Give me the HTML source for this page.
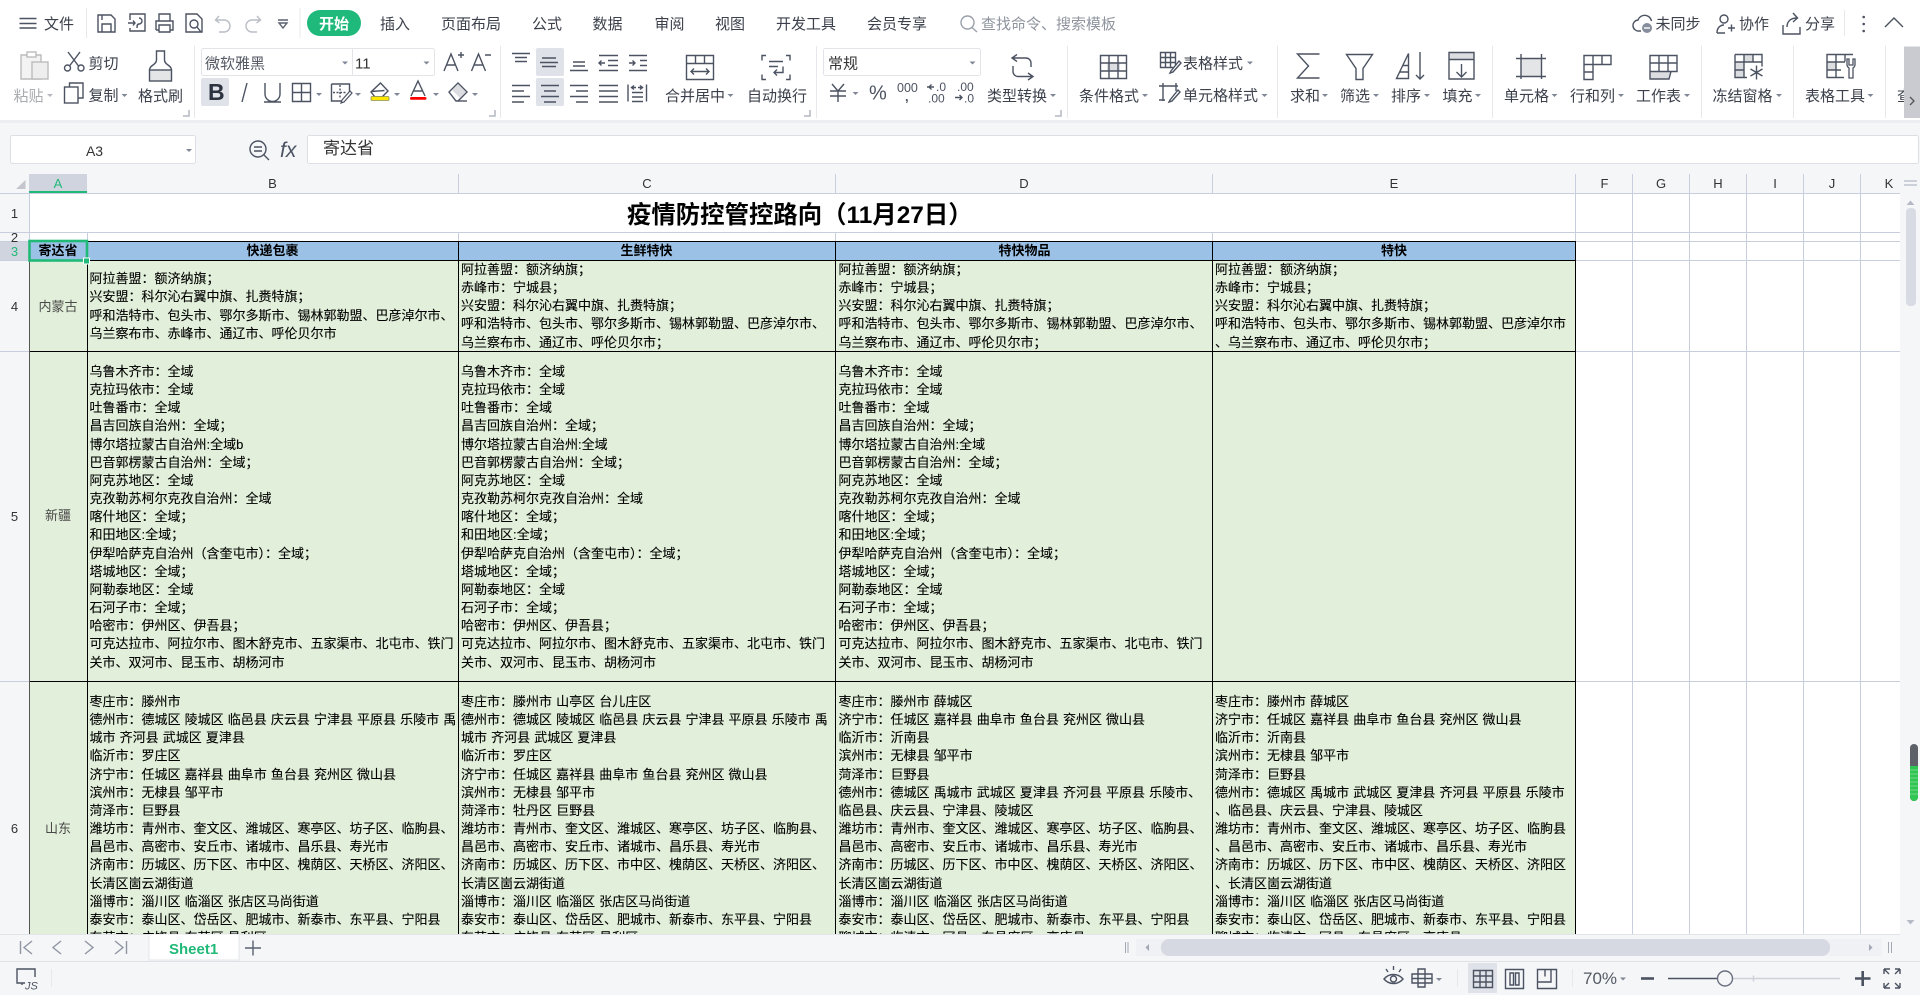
<!DOCTYPE html>
<html lang="zh-CN">
<head>
<meta charset="utf-8">
<title>疫情防控管控路向</title>
<style>
html,body{margin:0;padding:0;width:1920px;height:995px;overflow:hidden;background:#f5f6f8}
svg{position:absolute;left:0;top:0;display:block}
text{font-family:"Liberation Sans","Noto Sans CJK SC",sans-serif}
.t{font-size:15px;fill:#3b404b}
.g{font-size:15px;fill:#a9abae}
.i{fill:none;stroke:#4b5261;stroke-width:1.4}
.l{fill:none;stroke:#5a6170;stroke-width:1.4}
.m{fill:none;stroke:#b9bdc5;stroke-width:1.4}
.k{fill:#7f8695}
.h{font-size:13px;fill:#333;text-anchor:middle}
.sep{stroke:#e6e8ec;stroke-width:1}
.grid{stroke:#c8cedd;stroke-width:1;shape-rendering:crispEdges}
.blk{stroke:#000;stroke-width:1.2;shape-rendering:crispEdges}
#cells{position:absolute;left:0;top:0;width:1920px;height:934px;overflow:hidden;font-family:"Liberation Sans","Noto Sans CJK SC",sans-serif;color:#000}
.c{position:absolute;font-size:13px;line-height:18.15px;white-space:nowrap;word-spacing:.5px;-webkit-text-stroke:.12px #000}
.hd{position:absolute;top:241px;height:19px;line-height:19px;font-size:13px;font-weight:700;text-align:center;color:#000}
.p{position:absolute;left:29px;width:58px;text-align:center;font-size:13px;line-height:18px;color:#4a4a4a}
.title{position:absolute;left:627px;top:199px;height:33px;line-height:33px;font-size:24.4px;font-weight:700;color:#000;white-space:nowrap}
</style>
</head>
<body>
<svg width="1920" height="995" viewBox="0 0 1920 995">
<!-- backgrounds -->
<rect x="0" y="0" width="1920" height="120" fill="#fff"/>
<rect x="0" y="120" width="1920" height="4" fill="#eceef1"/>
<rect x="0" y="123" width="1920" height="51" fill="#f5f6f8"/>
<!-- sheet -->
<rect x="0" y="174" width="1900" height="19" fill="#f5f6f8"/>
<rect x="0" y="193" width="29" height="741" fill="#f5f6f8"/>
<rect x="29" y="193" width="1871" height="741" fill="#fff"/>
<rect x="29" y="241" width="1547" height="19" fill="#9bc2e6"/>
<rect x="29" y="260" width="1547" height="674" fill="#e2efda"/>
<rect x="29" y="174" width="58" height="19" fill="#d0d4de"/>
<rect x="29" y="191" width="58" height="2" fill="#21b978"/>
<rect x="0" y="241" width="29" height="19" fill="#d0d4de"/>
<!-- header lines -->
<path class="grid" d="M0 193.5H1900" stroke="#b0b7c9"/>
<path class="grid" d="M458.5 174V193M835.5 174V193M1212.5 174V193M1575.500 174V193M1632.5 174V193M1689.5 174V193M1746.5 174V193M1803.5 174V193M1860.5 174V193"/>
<path d="M25.5 180V189H16z" fill="#c3c6cd"/>
<!-- grid -->
<path class="grid" d="M29.5 193V934M0 232.5H1900M87.5 232V241M458.5 232V241M835.5 232V241M1212.5 232V241M1575.500 193V934M1632.5 193V934M1689.5 193V934M1746.5 193V934M1803.5 193V934M1860.5 193V934M1576 241.5H1900M1576 260.5H1900M1576 351.5H1900M1576 681.5H1900M0 241.5H29M0 260.5H29M0 351.5H29M0 681.5H29"/>
<path class="blk" d="M87.5 241V934M458.5 241V934M835.5 241V934M1212.5 241V934M1575.500 241V934M29 241.5H1576M29 260.5H1576M29 351.5H1576M29 681.5H1576"/>
<path d="M29.5 260V934" stroke="#555" stroke-width="1" shape-rendering="crispEdges"/>
<!-- col letters -->
<g class="h">
<text class="h" x="58" y="188" style="fill:#21b978">A</text>
<text class="h" x="272.5" y="188">B</text><text class="h" x="647" y="188">C</text><text class="h" x="1024" y="188">D</text><text class="h" x="1394" y="188">E</text><text class="h" x="1604.5" y="188">F</text><text class="h" x="1661" y="188">G</text><text class="h" x="1718" y="188">H</text><text class="h" x="1775" y="188">I</text><text class="h" x="1832" y="188">J</text><text class="h" x="1889" y="188">K</text>
<text class="h" x="14.5" y="218">1</text><text class="h" x="14.5" y="242">2</text><text class="h" x="14.5" y="256" style="fill:#21b978">3</text><text class="h" x="14.5" y="311">4</text><text class="h" x="14.5" y="521">5</text><text class="h" x="14.5" y="833">6</text>
</g>
<!-- selection -->
<rect x="29.5" y="241" width="57.5" height="19.5" fill="none" stroke="#21b978" stroke-width="2.6"/>
<rect x="83.5" y="258" width="6" height="6" fill="#21b978" stroke="#fff" stroke-width="1"/>

<!-- title bar -->
<path class="i" d="M19.5 18.5h17M19.5 23.5h17M19.5 28h17"/>
<text class="t" x="44" y="29">文件</text>
<path class="sep" d="M86.5 8V38M300 8V38M1844.5 10V36"/>
<path class="i" d="M98 15h13l4 4v13H98zM102 32v-8h9v8M102 15v5"/>
<path class="i" d="M130 20v-6h15v17h-15v-3M128 23h7m-2-2.500 2 2.500-2 2.500M139 18a3 3 0 0 1 3 3 3 3 0 0 1-3 3c-2 0-2 2-2 4"/>
<path class="i" d="M159 21v-7h11v7M156 30v-9h17v9h-3M159 30h-3M159 25h11v7h-11z"/>
<path class="i" d="M186 14h11l5 5v13h-16zM197 27l4 5"/><circle class="i" cx="194" cy="24" r="4"/>
<path class="m" d="M219 16l-3.500 4 4 3M216 20h8a6 6 0 0 1 0 12h-5"/>
<path class="m" d="M257 16l3.500 4-4 3M260 20h-8a6 6 0 0 0 0 12h5"/>
<path class="l" d="M278 20h10M279 23h8l-4 5z"/>
<rect x="307" y="10" width="54" height="26" rx="13" fill="#1fb97b"/>
<text x="319" y="29" font-size="15" font-weight="700" fill="#fff">开始</text>
<text class="t" x="380" y="29">插入</text>
<text class="t" x="441" y="29">页面布局</text>
<text class="t" x="532" y="29">公式</text>
<text class="t" x="592.5" y="29">数据</text>
<text class="t" x="654.5" y="29">审阅</text>
<text class="t" x="715" y="29">视图</text>
<text class="t" x="776" y="29">开发工具</text>
<text class="t" x="867" y="29">会员专享</text>
<circle cx="967.500" cy="22.500" r="6.500" fill="none" stroke="#9aa0ab" stroke-width="1.4"/><path d="M972 27.500l5 4.500" stroke="#9aa0ab" stroke-width="1.400"/>
<text x="981" y="29" font-size="15" fill="#8f949e">查找命令、搜索模板</text>
<!-- right top -->
<path class="i" d="M1641 31h-2a5.500 5.500 0 0 1-1-11 7 7 0 0 1 13.500 1"/>
<circle cx="1647" cy="28" r="5" fill="#868d9c"/><path d="M1644 28h6" stroke="#fff" stroke-width="1.400"/>
<text class="t" x="1655.500" y="29">未同步</text>
<circle class="i" cx="1724" cy="19" r="4"/><path class="i" d="M1717 33c0-5 3-8 7-8M1717 33h8M1728 28h7M1731.500 24.500v7"/>
<text class="t" x="1739" y="29">协作</text>
<path class="i" d="M1783 25v9h17v-7M1787 27c0-6 4-9 10-9M1793 13l4.500 5-4.500 4"/>
<text class="t" x="1805" y="29">分享</text>
<circle cx="1863.700" cy="17" r="1.300" fill="#4b5261"/><circle cx="1863.700" cy="24" r="1.300" fill="#4b5261"/><circle cx="1863.700" cy="31" r="1.300" fill="#4b5261"/>
<path class="i" d="M1885 27l9-9 9 9"/>

<!-- ribbon separators -->
<path class="sep" d="M194.500 46V118M500.500 46V118M816.500 46V118M1067.500 46V118M1277.500 46V118M1492.500 46V118M1701.500 46V118M1793.500 46V118M1885.500 46V118"/>
<!-- corner markers -->
<path d="M183 116h6v-6M489 116h6v-6M804 116h6v-6M1055 116h6v-6" fill="none" stroke="#b4b8c0" stroke-width="1.500"/>

<!-- clipboard -->
<path d="M21 55h20v24H21z" fill="#f3f3f3" stroke="#bcbcbc" stroke-width="1.400"/>
<rect x="27" y="52" width="9" height="5" fill="#fff" stroke="#bcbcbc" stroke-width="1.400"/>
<rect x="32" y="62" width="16" height="17" fill="#eee" stroke="#bcbcbc" stroke-width="1.400"/>
<text class="g" x="13.500" y="101">粘贴</text><path class="k" style="fill:#b5b8be" d="M47 94h6l-3 3z"/>
<path class="i" d="M69.500 66L80 52M78.500 66L68 52"/><circle class="i" cx="67.500" cy="68" r="3"/><circle class="i" cx="81" cy="68" r="3"/>
<text class="t" x="88.500" y="68.500">剪切</text>
<path class="i" d="M69.500 87v-4H83v15h-5"/><rect class="i" x="64.500" y="87" width="13.500" height="16"/>
<text class="t" x="88.500" y="100.500">复制</text><path class="k" d="M121.500 94h6l-3 3z"/>
<path class="i" d="M149.500 70c0-5 7-5 7-10v-9h8v9c0 5 7 5 7 10"/><rect x="149.500" y="70" width="22" height="11" fill="#e4e5e7" stroke="#4b5261" stroke-width="1.400"/>
<text class="t" x="138" y="101">格式刷</text>

<!-- font -->
<rect x="201.500" y="48.500" width="233" height="27" rx="2" fill="#fff" stroke="#e2e4e8"/>
<path d="M352.500 48V76" stroke="#e2e4e8"/>
<text x="205" y="68.500" font-size="15" fill="#555a64">微软雅黑</text><path class="k" d="M342 61.500h6l-3 3z"/>
<text x="355" y="68.500" font-size="15" fill="#333">11</text><path class="k" d="M423.500 61.500h6l-3 3z"/>
<path class="i" d="M444 71l7-17 7 17M446.500 65h9M458 55h6M461 52v6"/>
<path class="i" d="M471.500 71l7-17 7 17M474 65h9M485 55h6"/>
<rect x="201" y="78" width="28" height="28" rx="2" fill="#dfe2e8"/>
<text x="208" y="100" font-size="23" font-weight="700" fill="#2c3340">B</text>
<path class="i" d="M247 83l-5 19"/>
<path class="i" d="M265 83v11a7.500 7.500 0 0 0 15 0V83M264 102h17"/>
<path class="i" d="M292.500 83.500h18v18h-18zM301.500 83.500v18M292.500 92.500h18"/><path class="k" d="M316 93h6l-3 3z"/>
<path class="i" d="M331.500 84h18v8M331.500 84v17h10"/><path class="i" stroke-dasharray="2 1.500" stroke-width="1" d="M340 85v13M333 92.500h13"/><path d="M342 100l8-9 2 2-8 9-3 1z" fill="#fff" stroke="#4b5261" stroke-width="1.200"/><path class="k" d="M355 93h6l-3 3z"/>
<path class="i" d="M380.500 83l7.500 8-6 6h-7l-4-5zM371.500 91.500l13-1"/><rect x="371" y="96.500" width="18" height="4" rx="1" fill="#ffe800" stroke="#8a8f5a" stroke-width=".8"/><path class="k" d="M394 93h6l-3 3z"/>
<path class="i" d="M411 96l7-15 7 15M413.500 91h9"/><rect x="410" y="97" width="16.500" height="2.800" rx="1.400" fill="#f00"/><path class="k" d="M433 93h6l-3 3z"/>
<path d="M458 83l9 9-9 9h-2l-7-9z" fill="#fff" stroke="#4b5261" stroke-width="1.400"/><path d="M458 84l8 8-6 6-8-8z" fill="#dcdde0"/><path class="i" d="M458 101h9"/><path class="k" d="M472 93h6l-3 3z"/>

<!-- alignment -->
<rect x="536" y="48" width="28" height="28" rx="2" fill="#dfe2e8"/>
<rect x="536" y="78" width="28" height="28" rx="2" fill="#dfe2e8"/>
<path class="i" d="M512 53.500h18M515 57.500h12M515 61.500h12"/>
<path class="i" d="M542 58h14M540 62.500h18M542 66.500h14"/>
<path class="i" d="M573 62h12M573 66h12M570 70.500h18"/>
<path class="i" d="M599 55.500h19M608 60.500h10M608 65.500h10M599 70.500h19M605 63h-6m2.500-2.500L599 63l2.500 2.500"/>
<path class="i" d="M629 55.500h18M629 70.500h18M629 63h6m-2.500-2.500L635 63l-2.500 2.500M640 60.500h7M640 65.500h7"/>
<path class="i" d="M512 85.500h18M512 91h12M512 96.500h18M512 102h12"/>
<path class="i" d="M541 85.500h18M544 91h12M541 96.500h18M544 102h12"/>
<path class="i" d="M570 85.500h18M576 91h12M570 96.500h18M576 102h12"/>
<path class="i" d="M599 85.500h19M599 91h19M599 96.500h19M599 102h19"/>
<path class="i" d="M628 84.500v17M646.500 84.500v17M631 87.500h5m-2-2-2.500 2 2.500 2M643 87.500h-5m2-2 2.500 2-2.500 2M632 92.500h11M632 97h11M632 101.500h11"/>

<!-- merge -->
<path class="i" d="M686.500 55.500h27v24h-27zM686.500 63.500h27M695.500 55.500v8M704.500 55.500v8M691 71.500h18m-3-3 3 3-3 3m-12-6-3 3 3 3"/>
<text class="t" x="665" y="101">合并居中</text><path class="k" d="M727.500 94h6l-3 3z"/>
<path class="i" d="M766 55.500h-4v5M786 55.500h4v5M766 79.500h-4v-5M786 79.500h4v-5M769 61.500h14M769 66.500h9M783 66.500v6h-9m3-3-3 3 3 3"/>
<text class="t" x="747" y="101">自动换行</text>

<!-- number -->
<rect x="823.500" y="48.500" width="157" height="27" rx="2" fill="#fff" stroke="#e2e4e8"/>
<text x="828" y="68.500" font-size="15" fill="#333">常规</text><path class="k" d="M969.500 61.500h6l-3 3z"/>
<path class="i" d="M832 84l6 7 6-7M830 91h16M830 96h16M838 91v11"/>
<path class="k" d="M852.500 92h6l-3 3z"/>
<text x="869" y="99.500" font-size="20" fill="#4b5261">%</text>
<text x="897" y="92" font-size="12.500" fill="#4b5261" letter-spacing="0">000</text><text x="905" y="101" font-size="13" font-weight="700" fill="#4b5261">,</text>
<text x="936" y="91" font-size="12" fill="#4b5261">.0</text><path class="i" stroke-width="1.100" d="M927 86.500h7m-2.500-2.500-2.500 2.500 2.500 2.500" transform="translate(0,.5)"/><text x="928" y="102.500" font-size="12" fill="#4b5261">.00</text>
<text x="957" y="91" font-size="12" fill="#4b5261">.00</text><path class="i" stroke-width="1.100" d="M955 97.500h7m-2.500-2.500 2.500 2.500-2.500 2.500"/><text x="964" y="102.500" font-size="12" fill="#4b5261">.0</text>
<path class="i" d="M1017 54.500l-5 3.500 5 3.500M1012 58h14a5 5 0 0 1 5 5v4M1013 66v5.500a5 5 0 0 0 5 5h15M1028 73l5 3.500-5 3.500"/>
<text class="t" x="987" y="101">类型转换</text><path class="k" d="M1050 94h6l-3 3z"/>

<!-- cond format -->
<rect x="1107" y="62" width="13" height="9" fill="#dcdde0"/>
<path class="i" d="M1100.500 55.500h26v23h-26zM1100.500 63h26M1100.500 71h26M1109 55.500v23M1118 55.500v23"/>
<text class="t" x="1079" y="101">条件格式</text><path class="k" d="M1142 94h6l-3 3z"/>
<path class="i" d="M1160.500 52.500h15v15h-15zM1160.500 57.500h15M1160.500 62.500h15M1165.500 52.500v15M1170.500 52.500v15"/>
<path d="M1171 71l8-10 2 2-8 9-3 1z" fill="#fff" stroke="#4b5261" stroke-width="1.400"/>
<text class="t" x="1183" y="68.500">表格样式</text><path class="k" d="M1247 61.500h6l-3 3z"/>
<path class="i" d="M1159 86h19M1159 100h6M1163 83v18M1176 83v8"/><path d="M1170 100l8-10 2 2-8 9-3 1z" fill="#fff" stroke="#4b5261" stroke-width="1.400"/>
<text class="t" x="1183" y="100.500">单元格样式</text><path class="k" d="M1261.500 94h6l-3 3z"/>

<!-- edit -->
<path class="i" d="M1319.500 54h-22l11 12-11 12h22"/>
<text class="t" x="1290" y="101">求和</text><path class="k" d="M1322 94h6l-3 3z"/>
<path class="i" d="M1346.500 54.500h26l-9.500 14v11h-7v-11z"/>
<text class="t" x="1340" y="101">筛选</text><path class="k" d="M1373 94h6l-3 3z"/>
<path class="i" d="M1396.500 78.500l12-25v25zM1403 65.500h5.500M1400 72h8.500M1420 52v27m-4-4 4 4 4-4"/>
<text class="t" x="1391" y="101">排序</text><path class="k" d="M1424 94h6l-3 3z"/>
<rect x="1449" y="52.500" width="25" height="7" fill="#dcdde0"/>
<path class="i" d="M1449 52.500h25v26.500h-25zM1449 59.500h25M1461.500 64v13m-5-5 5 5 5-5"/>
<text class="t" x="1442.500" y="101">填充</text><path class="k" d="M1475 94h6l-3 3z"/>

<!-- cell group -->
<rect x="1521" y="59" width="21" height="17" fill="#e4e5e7"/>
<path class="i" d="M1516 58.500h30M1516 76.500h30M1521 54v25M1541.500 54v25"/>
<text class="t" x="1504" y="101">单元格</text><path class="k" d="M1551.500 94h6l-3 3z"/>
<path class="i" d="M1584 55.500h27v9h-18v15h-9zM1593 55.500v24M1602 55.500v9M1584 64.500h9M1584 72h9"/>
<text class="t" x="1570" y="101">行和列</text><path class="k" d="M1618 94h6l-3 3z"/>
<path d="M1650 71h21l-2 8h-19z" fill="#dcdde0"/>
<path class="i" d="M1650 55.500h27v16h-6l-2 7.500h-19zM1650 63h27M1650 71.500h21M1659 55.500v16M1668 55.500v16"/>
<text class="t" x="1636" y="101">工作表</text><path class="k" d="M1684 94h6l-3 3z"/>
<path d="M1735 54h9v8h9v-8M1735 62h9v16h-9z" fill="#dcdde0"/>
<path class="i" d="M1735 54.500h27v12M1735 54.500v23h12M1735 62h27M1735 70h9M1744 54.500v23M1753 54.500v7.500"/>
<path class="i" d="M1756.500 65.500v14M1750.500 69l12 7M1762.500 69l-12 7"/>
<text class="t" x="1712.500" y="101">冻结窗格</text><path class="k" d="M1776 94h6l-3 3z"/>
<rect x="1827" y="62" width="9" height="8" fill="#dcdde0"/>
<path class="i" d="M1853 54.500h-26v23h17M1827 62h18M1827 70h14M1836 54.500v23M1845 54.500v7"/>
<path d="M1847 59v6a4.500 4.500 0 0 0 2 3v10h4V68a4.500 4.500 0 0 0 2-3v-6l-2 0v6h-4v-6z" fill="#fff" stroke="#4b5261" stroke-width="1.300"/>
<text class="t" x="1805" y="101">表格工具</text><path class="k" d="M1867.500 94h6l-3 3z"/>
<text class="t" x="1897" y="101">查</text>
<rect x="1904" y="46.500" width="16" height="71.500" fill="#c9cbd1"/>
<path d="M1910 97l4 4-4 4" fill="none" stroke="#555" stroke-width="1.300"/>

<!-- formula bar -->
<rect x="10.500" y="135.500" width="185" height="28" rx="2" fill="#fff" stroke="#dcdfe4"/>
<text x="94.500" y="156" font-size="14" fill="#333" text-anchor="middle">A3</text>
<path class="k" d="M186 149h6l-3 3z"/>
<circle class="i" cx="258" cy="149" r="8"/><path class="i" d="M254 147h8M254 151h8M264 155l5 5"/>
<text x="280" y="157" font-size="21" font-family="Liberation Serif" font-style="italic" fill="#4b5261">fx</text>
<rect x="307.500" y="135.500" width="1611" height="28" rx="2" fill="#fff" stroke="#dcdfe4"/>
<text x="323" y="154" font-size="17" fill="#333">寄达省</text>

<!-- vertical scrollbar -->
<rect x="1900" y="174" width="20" height="760" fill="#f5f6f8"/>
<path d="M1904 181h13M1904 185h13" stroke="#b5bac6" stroke-width="1.200"/>
<path d="M1906.500 205l4-4.500 4 4.500z" fill="#b5bac6"/>
<rect x="1906" y="208" width="10" height="98" rx="4" fill="#d8dbe3"/>
<path d="M1906.500 920h8l-4 4.500z" fill="#b5bac6"/>
<rect x="1910" y="744" width="8" height="57" rx="4" fill="#5e6167"/>
<path d="M1910 766h8v31a4 4 0 0 1-8 0z" fill="#2fc653"/>
<path d="M1910 770h8M1910 774h8M1910 778h8M1910 782h8M1910 786h8M1910 790h8M1910 794h8" stroke="#8fdc9f" stroke-width=".7"/>

<!-- tab bar -->
<rect x="0" y="934" width="1920" height="27" fill="#f5f6f8"/>
<path d="M0 934.500H1900" stroke="#e2e4e9"/>
<path class="l" style="stroke:#9096a2" d="M20.500 941v13M32 941l-8 6.500 8 6.500M61 941l-8 6.500 8 6.500M85 941l8 6.500-8 6.500M115 941l8 6.500-8 6.500M126.500 941v13"/>
<rect x="149" y="934" width="90" height="26" fill="#fff" stroke="#e2e4e9"/>
<text x="169" y="954" font-size="15" font-weight="700" fill="#21b978">Sheet1</text>
<path class="l" d="M245 948h16M253 940.500v15"/>
<path d="M1125.500 942v11M1128 942v11M1888.500 942v11M1891.500 942v11" stroke="#a3a8b4"/>
<rect x="1136" y="939" width="746" height="17" fill="#f0f1f4"/>
<rect x="1161" y="939" width="669" height="17" rx="8" fill="#d6d9e1"/>
<path d="M1149 944v7l-3.500-3.500zM1869 944v7l3.500-3.500z" fill="#a3a8b4"/>

<!-- status bar -->
<rect x="0" y="961" width="1920" height="34" fill="#f5f6f8"/>
<path d="M0 961.500H1920" stroke="#dfe1e6"/>
<path class="i" d="M35 977v-8H17v14h8M22 983v2"/>
<text x="25" y="989.500" font-size="11" font-style="italic" fill="#4b5261">JS</text>
<path class="sep" d="M51.500 969V987M1457.500 969V987M1572.500 969V987"/>
<path class="i" d="M1384 979c5-6 14-6 19 0-5 6-14 6-19 0zM1386 969l2 3M1393.500 966v4M1401 969l-2 3"/><circle class="i" cx="1393.500" cy="979" r="3"/>
<path class="i" d="M1418 969h7v5h7v9h-7v4h-7v-4h-6v-9h6zM1418 974h7v9h-7zM1412 978.500h20"/>
<path class="k" d="M1436 978h6l-3 3z"/>
<rect x="1468" y="963" width="29" height="30" rx="1" fill="#dfe2e8"/>
<path class="i" d="M1473.500 970.500h19v17h-19zM1473.500 976h19M1473.500 982h19M1480 970.500v17M1486 970.500v17"/>
<path class="i" d="M1505.500 969.500h18v19h-18zM1510 973h3.500v12H1510zM1515.500 973h3.500v12h-3.500z" stroke-width="1.600"/>
<path class="i" d="M1537.500 969.500h19v19h-19zM1537.500 982h13.500v-12.500M1545 969.500v7" stroke-width="1.600"/>
<text x="1583" y="984" font-size="17" fill="#555a64">70%</text>
<path class="k" d="M1620 977.500h6l-3 3z"/>
<path d="M1641 978.500h13" stroke="#4b5261" stroke-width="2.600"/>
<path d="M1668 978.500h50" stroke="#4b5261" stroke-width="1.400"/>
<path d="M1732 978.500h108M1753.500 975.500v6" stroke="#cdd1da" stroke-width="1.400"/>
<circle cx="1725" cy="978.500" r="7.500" fill="#f5f6f8" stroke="#6a7080" stroke-width="1.400"/>
<path d="M1855 978.500h15.500M1862.700 971v15" stroke="#4b5261" stroke-width="2.600"/>
<path class="i" d="M1884 969h6M1884 969v5M1884 969l5 5M1900 969h-5M1900 969v5M1900 969l-5 5M1884 988h6M1884 988v-5M1884 988l5-5M1900 988h-5M1900 988v-5M1900 988l-5-5"/>
</svg>

<div id="cells">
<div class="title">疫情防控管控路向（11月27日）</div>
<div class="hd" style="left:29px;width:58px">寄达省</div>
<div class="hd" style="left:87px;width:371px">快递包裹</div>
<div class="hd" style="left:458px;width:377px">生鲜特快</div>
<div class="hd" style="left:836px;width:377px">特快物品</div>
<div class="hd" style="left:1212px;width:364px">特快</div>
<div class="p" style="top:298px">内蒙古</div>
<div class="p" style="top:507px">新疆</div>
<div class="p" style="top:820px">山东</div>

<div class="c" style="left:89.5px;top:270.2px">阿拉善盟：额济纳旗；<br>兴安盟：科尔沁右翼中旗、扎赉特旗；<br>呼和浩特市、包头市、鄂尔多斯市、锡林郭勒盟、巴彦淖尔市、<br>乌兰察布市、赤峰市、通辽市、呼伦贝尔市</div>
<div class="c" style="left:461px;top:261px">阿拉善盟：额济纳旗；<br>赤峰市：宁城县；<br>兴安盟：科尔沁右翼中旗、扎赉特旗；<br>呼和浩特市、包头市、鄂尔多斯市、锡林郭勒盟、巴彦淖尔市、<br>乌兰察布市、通辽市、呼伦贝尔市；</div>
<div class="c" style="left:838.5px;top:261px">阿拉善盟：额济纳旗；<br>赤峰市：宁城县；<br>兴安盟：科尔沁右翼中旗、扎赉特旗；<br>呼和浩特市、包头市、鄂尔多斯市、锡林郭勒盟、巴彦淖尔市、<br>乌兰察布市、通辽市、呼伦贝尔市；</div>
<div class="c" style="left:1215px;top:261px">阿拉善盟：额济纳旗；<br>赤峰市：宁城县；<br>兴安盟：科尔沁右翼中旗、扎赉特旗；<br>呼和浩特市、包头市、鄂尔多斯市、锡林郭勒盟、巴彦淖尔市<br>、乌兰察布市、通辽市、呼伦贝尔市；</div>

<div class="c" style="left:89.5px;top:363px">乌鲁木齐市：全域<br>克拉玛依市：全域<br>吐鲁番市：全域<br>昌吉回族自治州：全域；<br>博尔塔拉蒙古自治州:全域b<br>巴音郭楞蒙古自治州：全域；<br>阿克苏地区：全域<br>克孜勒苏柯尔克孜自治州：全域<br>喀什地区：全域；<br>和田地区:全域；<br>伊犁哈萨克自治州（含奎屯市）：全域；<br>塔城地区：全域；<br>阿勒泰地区：全域<br>石河子市：全域；<br>哈密市：伊州区、伊吾县；<br>可克达拉市、阿拉尔市、图木舒克市、五家渠市、北屯市、铁门<br>关市、双河市、昆玉市、胡杨河市</div>
<div class="c" style="left:461px;top:363px">乌鲁木齐市：全域<br>克拉玛依市：全域<br>吐鲁番市：全域<br>昌吉回族自治州：全域；<br>博尔塔拉蒙古自治州:全域<br>巴音郭楞蒙古自治州：全域；<br>阿克苏地区：全域<br>克孜勒苏柯尔克孜自治州：全域<br>喀什地区：全域；<br>和田地区:全域；<br>伊犁哈萨克自治州（含奎屯市）：全域；<br>塔城地区：全域；<br>阿勒泰地区：全域<br>石河子市：全域；<br>哈密市：伊州区、伊吾县；<br>可克达拉市、阿拉尔市、图木舒克市、五家渠市、北屯市、铁门<br>关市、双河市、昆玉市、胡杨河市</div>
<div class="c" style="left:838.5px;top:363px">乌鲁木齐市：全域<br>克拉玛依市：全域<br>吐鲁番市：全域<br>昌吉回族自治州：全域；<br>博尔塔拉蒙古自治州:全域<br>巴音郭楞蒙古自治州：全域；<br>阿克苏地区：全域<br>克孜勒苏柯尔克孜自治州：全域<br>喀什地区：全域；<br>和田地区:全域；<br>伊犁哈萨克自治州（含奎屯市）：全域；<br>塔城地区：全域；<br>阿勒泰地区：全域<br>石河子市：全域；<br>哈密市：伊州区、伊吾县；<br>可克达拉市、阿拉尔市、图木舒克市、五家渠市、北屯市、铁门<br>关市、双河市、昆玉市、胡杨河市</div>

<div class="c" style="left:89.5px;top:693px">枣庄市：滕州市<br>德州市：德城区 陵城区 临邑县 庆云县 宁津县 平原县 乐陵市 禹<br>城市 齐河县 武城区 夏津县<br>临沂市：罗庄区<br>济宁市：任城区 嘉祥县 曲阜市 鱼台县 兖州区 微山县<br>滨州市：无棣县 邹平市<br>菏泽市：巨野县<br>潍坊市：青州市、奎文区、潍城区、寒亭区、坊子区、临朐县、<br>昌邑市、高密市、安丘市、诸城市、昌乐县、寿光市<br>济南市：历城区、历下区、市中区、槐荫区、天桥区、济阳区、<br>长清区崮云湖街道<br>淄博市：淄川区 临淄区 张店区马尚街道<br>泰安市：泰山区、岱岳区、肥城市、新泰市、东平县、宁阳县<br>东营市：广饶县 东营区 垦利区</div>
<div class="c" style="left:461px;top:693px">枣庄市：滕州市 山亭区 台儿庄区<br>德州市：德城区 陵城区 临邑县 庆云县 宁津县 平原县 乐陵市 禹<br>城市 齐河县 武城区 夏津县<br>临沂市：罗庄区<br>济宁市：任城区 嘉祥县 曲阜市 鱼台县 兖州区 微山县<br>滨州市：无棣县 邹平市<br>菏泽市：牡丹区 巨野县<br>潍坊市：青州市、奎文区、潍城区、寒亭区、坊子区、临朐县、<br>昌邑市、高密市、安丘市、诸城市、昌乐县、寿光市<br>济南市：历城区、历下区、市中区、槐荫区、天桥区、济阳区、<br>长清区崮云湖街道<br>淄博市：淄川区 临淄区 张店区马尚街道<br>泰安市：泰山区、岱岳区、肥城市、新泰市、东平县、宁阳县<br>东营市：广饶县 东营区 垦利区</div>
<div class="c" style="left:838.5px;top:693px">枣庄市：滕州市 薛城区<br>济宁市：任城区 嘉祥县 曲阜市 鱼台县 兖州区 微山县<br>临沂市：沂南县<br>滨州市：无棣县 邹平市<br>菏泽市：巨野县<br>德州市：德城区 禹城市 武城区 夏津县 齐河县 平原县 乐陵市、<br>临邑县、庆云县、宁津县、陵城区<br>潍坊市：青州市、奎文区、潍城区、寒亭区、坊子区、临朐县、<br>昌邑市、高密市、安丘市、诸城市、昌乐县、寿光市<br>济南市：历城区、历下区、市中区、槐荫区、天桥区、济阳区、<br>长清区崮云湖街道<br>淄博市：淄川区 临淄区 张店区马尚街道<br>泰安市：泰山区、岱岳区、肥城市、新泰市、东平县、宁阳县<br>聊城市：临清市、冠县、东昌府区、高唐县</div>
<div class="c" style="left:1215px;top:693px">枣庄市：滕州市 薛城区<br>济宁市：任城区 嘉祥县 曲阜市 鱼台县 兖州区 微山县<br>临沂市：沂南县<br>滨州市：无棣县 邹平市<br>菏泽市：巨野县<br>德州市：德城区 禹城市 武城区 夏津县 齐河县 平原县 乐陵市<br>、临邑县、庆云县、宁津县、陵城区<br>潍坊市：青州市、奎文区、潍城区、寒亭区、坊子区、临朐县<br>、昌邑市、高密市、安丘市、诸城市、昌乐县、寿光市<br>济南市：历城区、历下区、市中区、槐荫区、天桥区、济阳区<br>、长清区崮云湖街道<br>淄博市：淄川区 临淄区 张店区马尚街道<br>泰安市：泰山区、岱岳区、肥城市、新泰市、东平县、宁阳县<br>聊城市：临清市、冠县、东昌府区、高唐县</div>
</div>
</body>
</html>
